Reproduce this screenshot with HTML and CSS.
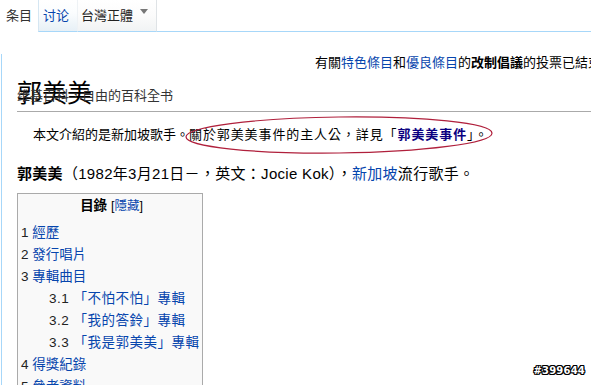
FILE: index.html
```html
<!DOCTYPE html>
<html lang="zh-Hant">
<head>
<meta charset="utf-8">
<title>郭美美</title>
<link rel="stylesheet" href="styles.css">
</head>
<body>
<div class="tabs">
  <div class="tab tab-selected">条目</div>
  <div class="tab tab-talk"><a href="#">讨论</a></div>
  <div class="tab tab-variant">台灣正體<span class="arrow"></span></div>
  <div class="tab-rest"></div>
</div>
<div class="content">
  <div class="notice">有關<a href="#">特色條目</a>和<a href="#">優良條目</a>的<b>改制倡議</b>的投票已結束，結果請參閱</div>
  <div class="heading">
    <h1>郭美美</h1>
    <div class="sitesub">维基百科，自由的百科全书</div>
  </div>
  <div class="hatnote">本文介紹的是新加坡歌手。<span class="wide">關於郭美美事件的主人公，詳見「<a class="visited" href="#"><b>郭美美事件</b></a>」。</span></div>
  <p class="lead"><b>郭美美</b>（1982年3月21日－，英文：Jocie Kok），<a href="#">新加坡</a>流行歌手。</p>
  <div class="toc">
    <div class="toc-title"><b>目錄</b> <span class="toc-toggle">[<a href="#">隱藏</a>]</span></div>
    <ul class="toc-list">
      <li><a href="#"><span class="num">1</span> 經歷</a></li>
      <li><a href="#"><span class="num">2</span> 發行唱片</a></li>
      <li><a href="#"><span class="num">3</span> 專輯曲目</a>
        <ul class="toc-sub">
          <li><a href="#"><span class="num">3.1</span> 「不怕不怕」專輯</a></li>
          <li><a href="#"><span class="num">3.2</span> 「我的答鈴」專輯</a></li>
          <li><a href="#"><span class="num">3.3</span> 「我是郭美美」專輯</a></li>
        </ul>
      </li>
      <li><a href="#"><span class="num">4</span> 得獎紀錄</a></li>
      <li><a href="#"><span class="num">5</span> 參考資料</a></li>
    </ul>
  </div>
</div>
<svg class="annot" width="591" height="385" viewBox="0 0 591 385">
  <ellipse cx="339" cy="135" rx="153" ry="18" transform="rotate(-0.7 339 135)" fill="none" stroke="#b0203c" stroke-width="1.2"/>
</svg>
<div class="watermark">#399644</div>
</body>
</html>
```
FILE: styles.css
```css
html, body {
  margin: 0;
  padding: 0;
  background: #fff;
  width: 591px;
  height: 385px;
  overflow: hidden;
}
body {
  font-family: "Liberation Sans", "Noto Sans CJK TC", sans-serif;
  color: #000;
  position: relative;
}
a {
  color: #0645ad;
  text-decoration: none;
}
a.visited {
  color: #0b0080;
}
.tabs {
  display: flex;
  height: 32px;
  font-size: 13px;
}
.tab {
  display: flex;
  align-items: center;
  height: 32px;
  box-sizing: border-box;
  padding-bottom: 3px;
}
.tab-selected {
  width: 38px;
  padding-left: 6px;
  color: #333;
  background: #fff;
}
.tab-talk {
  width: 39px;
  padding-left: 4px;
  background: linear-gradient(#fff 0%, #fbfdfe 40%, #e7f0f6 100%);
  border-left: 1px solid #d5e6f2;
  border-bottom: 1px solid #a7d7f9;
}
.tab-variant {
  width: 80px;
  padding-left: 3px;
  color: #222;
  background: linear-gradient(#fff 0%, #fbfbfb 50%, #f1f3f4 100%);
  border-left: 1px solid #eef2f5;
  border-right: 1px solid #dfe3e6;
  border-bottom: 1px solid #a7d7f9;
}
.arrow {
  width: 0;
  height: 0;
  margin-left: 7px;
  margin-top: -6px;
  border-left: 4px solid transparent;
  border-right: 4px solid transparent;
  border-top: 5px solid #777;
}
.tab-rest {
  flex: 1;
  height: 32px;
  box-sizing: border-box;
  border-bottom: 1px solid #a7d7f9;
}
.content {
  margin-left: 1px;
  border-left: 1px solid #a7d7f9;
  padding-left: 15px;
  height: 400px;
}
.notice {
  margin-top: 22px;
  padding-left: 298px;
  font-size: 13px;
  line-height: 18px;
  white-space: nowrap;
  overflow: hidden;
}
.heading {
  position: relative;
  margin-top: 6px;
  border-bottom: 1px solid #aaa;
  padding-bottom: 2px;
}
h1 {
  margin: 0;
  font-weight: normal;
  font-size: 25px;
  line-height: 31px;
  font-family: "Liberation Sans", "Noto Sans CJK TC", sans-serif;
  color: #000;
}
.sitesub {
  position: absolute;
  left: 0;
  top: 9px;
  font-size: 13px;
  line-height: 18px;
  color: #333;
}
.hatnote {
  margin-top: 13px;
  padding-left: 16px;
  font-size: 13px;
  line-height: 20px;
}
.wide {
  letter-spacing: 0.9px;
}
.lead {
  margin: 18px 0 0;
  font-size: 15px;
  line-height: 22px;
  letter-spacing: 0.3px;
}
.toc {
  margin-top: 8px;
  width: 186px;
  border: 1px solid #aaa;
  background: #f9f9f9;
  font-size: 13.5px;
  padding: 2px 0 0 3px;
  box-sizing: border-box;
}
.toc-title {
  text-align: center;
  line-height: 20px;
}
.toc-toggle {
  font-size: 12.5px;
}
.toc-list, .toc-sub {
  list-style: none;
  margin: 0;
  padding: 0;
}
.toc-list {
  margin-top: 6px;
}
.toc-list li {
  line-height: 22px;
}
.toc-sub {
  padding-left: 28px;
}
.toc-sub li {
  letter-spacing: 0.5px;
}
.num {
  color: #222;
}
.annot {
  position: absolute;
  left: 0;
  top: 0;
  pointer-events: none;
}
.watermark {
  position: absolute;
  right: 6px;
  top: 365px;
  font-family: "DejaVu Sans", sans-serif;
  font-size: 10px;
  font-weight: bold;
  color: #fff;
  letter-spacing: 0.2px;
  text-shadow: 1px 0 0 #000, -1px 0 0 #000, 0 1px 0 #000, 0 -1px 0 #000, 1px 1px 0 #000, -1px -1px 0 #000, 1px -1px 0 #000, -1px 1px 0 #000;
}
```
